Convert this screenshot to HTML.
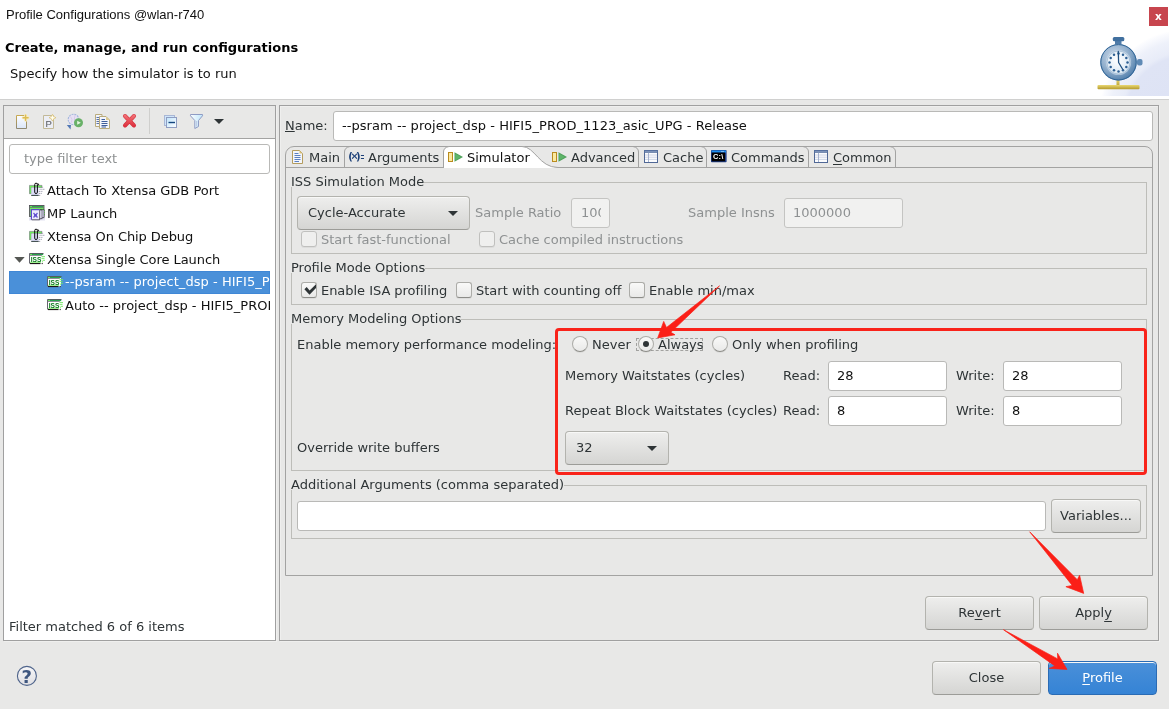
<!DOCTYPE html>
<html><head><meta charset="utf-8"><title>Profile Configurations</title>
<style>
*{box-sizing:border-box;margin:0;padding:0}
html,body{width:1169px;height:709px;overflow:hidden;background:#e8e8e7}
body{position:relative;will-change:transform;font-family:"DejaVu Sans","Liberation Sans",sans-serif;font-size:13px;color:#2e3436;line-height:18px}
.a{position:absolute;white-space:nowrap}
.hdr{left:0;top:0;width:1169px;height:99px;background:#fff}
.hline{left:0;top:99px;width:1169px;height:1px;background:#d0d0cf}
.panel{border:1px solid #a0a0a0;box-shadow:inset 1px 1px 0 rgba(255,255,255,0.3),1px 1px 0 rgba(255,255,255,0.3)}
.inp{background:#fff;border:1px solid #b9b9b7;border-radius:3px}
.dis{color:#8e9192}
.btn{border:1px solid #b3b3ae;border-bottom-color:#9c9c98;border-radius:4px;background:linear-gradient(#eeeeed,#d5d5d3);box-shadow:inset 0 1px #f8f8f7;text-align:center}
.grp{border:1px solid #bdbdb9}
.glab{background:#e8e8e7;height:14px}
.cb{width:16px;height:16px;border:1px solid #acaca8;border-bottom-color:#8c8c88;box-shadow:0 1px 0 rgba(0,0,0,0.05);border-radius:3px;background:linear-gradient(#f9f9f8,#e9e9e8)}
.rb{width:16px;height:16px;border:1px solid #acaca8;border-bottom-color:#8c8c88;box-shadow:0 1px 0 rgba(0,0,0,0.05);border-radius:50%;background:linear-gradient(#f9f9f8,#e9e9e8)}
.tri{width:0;height:0;border-left:5px solid transparent;border-right:5px solid transparent;border-top:5px solid #2e3436}
u{text-decoration:underline;text-underline-offset:2px}
</style></head><body>
<!-- header -->
<div class="a hdr"></div>
<div class="a hline"></div>
<div class="a" style="left:6px;top:6px;font-family:'Liberation Sans',sans-serif;font-size:13px;color:#111">Profile Configurations @wlan-r740</div>
<div class="a" style="left:5px;top:39px;font-weight:bold;color:#000">Create, manage, and run configurations</div>
<div class="a" style="left:10px;top:65px;color:#111">Specify how the simulator is to run</div>
<div class="a" style="left:1149px;top:7px;width:19px;height:19px;background:#c7454e;color:#fff;font-size:10.500px;font-weight:bold;text-align:center;line-height:18px">x</div>

<!-- left panel -->
<div class="a panel" style="left:3px;top:105px;width:273px;height:536px;background:#fff"></div>
<div class="a" style="left:4px;top:106px;width:271px;height:33px;background:#e8e8e7;border-bottom:1px solid #a3a3a2"></div>
<div class="a" style="left:149px;top:108px;width:1px;height:26px;background:#cfcfcd"></div>

<!-- toolbar icons -->
<svg class="a" style="left:15px;top:113px" width="16" height="17" viewBox="0 0 16 17">
<defs><linearGradient id="pg" x1="0" y1="0" x2="0" y2="1"><stop offset="0" stop-color="#fdfdff"/><stop offset="1" stop-color="#dbe6f7"/></linearGradient><linearGradient id="pgs" x1="0" y1="0" x2="0" y2="1"><stop offset="0" stop-color="#c8aa52"/><stop offset="1" stop-color="#8f8872"/></linearGradient></defs>
<path d="M1.500,2.500 H11.500 V15.500 H1.500 Z" fill="url(#pg)" stroke="url(#pgs)" stroke-width="1"/>
<path d="M10.600,2.200 V7.200 M8.100,4.700 H13.100" stroke="#f6ecc0" stroke-width="3" stroke-linecap="round"/>
<path d="M10.600,2.200 V7.200 M8.100,4.700 H13.100" stroke="#dcbc55" stroke-width="1.400" stroke-linecap="round"/>
</svg>
<svg class="a" style="left:42px;top:113px" width="16" height="17" viewBox="0 0 16 17">
<path d="M1.500,2.500 H11.500 V15.500 H1.500 Z" fill="#eceef5" stroke="#c2b998" stroke-width="1"/>
<text x="3.400" y="13.500" font-family="Liberation Sans,sans-serif" font-size="9.600" fill="#55575c">P</text>
<path d="M10.500,1.300 L11.700,3.500 L13.900,4.700 L11.700,5.900 L10.500,8.100 L9.300,5.900 L7.100,4.700 L9.300,3.500 Z" fill="#f7ecc0" stroke="#d8c079" stroke-width="0.800"/>
<path d="M10.500,2.700 V6.700 M8.500,4.700 H12.500" stroke="#fffdf0" stroke-width="1.100"/>
</svg>
<svg class="a" style="left:66px;top:113px" width="18" height="17" viewBox="0 0 18 17">
<circle cx="7.500" cy="6.500" r="5.300" fill="#e6e1f3" stroke="#a3b7dc" stroke-width="1.100" stroke-dasharray="2 0.800"/>
<path d="M4.500,3.500 Q7,6 5.500,9.500 M9,2 Q7.500,6 9.500,10.500" stroke="#d6c6ea" stroke-width="0.900" fill="none"/>
<circle cx="12.500" cy="9.700" r="4.500" fill="#69b168"/>
<path d="M11.200,7.700 L14.800,9.700 L11.200,11.700 Z" fill="#e6f6e2"/>
<path d="M0.800,12 L5,12 L4.500,16.500 Z" fill="#5278b5"/>
</svg>
<svg class="a" style="left:94px;top:113px" width="17" height="17" viewBox="0 0 17 17">
<path d="M1.500,1.500 H8 V13.500 H1.500 Z" fill="#f2f4fb" stroke="#b9ab7c"/>
<path d="M2.500,4.500 H5 M2.500,6.500 H5 M2.500,8.500 H5 M2.500,10.500 H5" stroke="#5b74a8" stroke-width="1"/>
<path d="M5.500,3.500 H12 L15.500,7 V15.500 H5.500 Z" fill="#f4f6fc" stroke="#b9ab7c"/>
<path d="M12,3.500 L15.500,7 H12 Z" fill="#dcc98f"/>
<path d="M7.500,6.500 H11 M7.500,8.500 H13.500 M7.500,10.500 H13.500 M7.500,12.500 H13.500 M7.500,14 H12" stroke="#3f5f9c" stroke-width="1.100"/>
</svg>
<svg class="a" style="left:122px;top:113px" width="16" height="16" viewBox="0 0 16 16">
<defs><linearGradient id="rx" gradientUnits="userSpaceOnUse" x1="0" y1="1" x2="0" y2="14"><stop offset="0" stop-color="#f4777b"/><stop offset="1" stop-color="#dc2d3b"/></linearGradient></defs>
<path d="M3,3 L12,12.500 M12,3 L3,12.500" stroke="#d3303c" stroke-width="4" stroke-linecap="round"/>
<path d="M3,3 L12,12.500 M12,3 L3,12.500" stroke="url(#rx)" stroke-width="3" stroke-linecap="round"/>
</svg>
<svg class="a" style="left:163px;top:114px" width="16" height="16" viewBox="0 0 16 16">
<defs><linearGradient id="cl" x1="0" y1="0" x2="1" y2="1"><stop offset="0" stop-color="#bfe4fb"/><stop offset="1" stop-color="#fdfeff"/></linearGradient></defs>
<rect x="1.500" y="1.500" width="10" height="10" fill="#cfe6fa" stroke="#a9b7d6"/>
<rect x="3.500" y="3.500" width="10" height="10" fill="url(#cl)" stroke="#8f9dc2"/>
<path d="M5.500,8.500 H12" stroke="#14467f" stroke-width="1.400"/>
</svg>
<svg class="a" style="left:189px;top:113px" width="16" height="17" viewBox="0 0 16 17">
<defs><linearGradient id="fn" x1="0" y1="0" x2="1" y2="0"><stop offset="0" stop-color="#fafdff"/><stop offset="1" stop-color="#bfe6fb"/></linearGradient></defs>
<path d="M1.500,1.500 H13.500 V2.800 L9.500,7.500 V13.500 L5.800,15.500 V7.500 L1.500,2.800 Z" fill="url(#fn)" stroke="#8e9bc4" stroke-width="1"/>
<path d="M7.700,8 V13.500" stroke="#b7c3e0" stroke-width="1"/>
</svg>
<div class="a" style="left:214px;top:119px;width:0;height:0;border-left:5px solid transparent;border-right:5px solid transparent;border-top:5px solid #2e3436"></div>
<div class="a inp" style="left:9px;top:144px;width:261px;height:30px"></div>
<div class="a" style="left:24px;top:150px;color:#8e9192">type filter text</div>
<div class="a" style="left:9px;top:271px;width:261px;height:23px;background:#4a90d9;border:1px solid #3f87d6"></div>
<div class="a" style="left:47px;top:182px;color:#111">Attach To Xtensa GDB Port</div>
<div class="a" style="left:47px;top:205px;color:#111">MP Launch</div>
<div class="a" style="left:47px;top:228px;color:#111;letter-spacing:-0.08px">Xtensa On Chip Debug</div>
<div class="a" style="left:47px;top:251px;color:#111;letter-spacing:-0.05px">Xtensa Single Core Launch</div>
<div class="a" style="left:65px;top:273px;color:#fff;width:205px;overflow:hidden;letter-spacing:0.04px">--psram -- project_dsp - HIFI5_PROD_1123</div>
<div class="a" style="left:65px;top:297px;width:205px;overflow:hidden;color:#111">Auto -- project_dsp - HIFI5_PROD_1123</div>
<div class="a" style="left:9px;top:618px">Filter matched 6 of 6 items</div>

<!-- right panel -->
<div class="a panel" style="left:279px;top:105px;width:880px;height:536px"></div>
<div class="a" style="left:285px;top:117px"><u style="text-underline-offset:1px">N</u>ame:</div>
<div class="a inp" style="left:333px;top:111px;width:820px;height:30px"></div>
<div class="a" style="left:342px;top:117px;color:#111;letter-spacing:0.05px">--psram -- project_dsp - HIFI5_PROD_1123_asic_UPG - Release</div>


<!-- tab folder -->
<div class="a" style="left:285px;top:146px;width:868px;height:430px;border:1px solid #a3a3a2;border-radius:8px 8px 0 0;border-top-left-radius:9px"></div>
<div class="a" style="left:286px;top:167px;width:866px;height:1px;background:#a3a3a2"></div>
<svg class="a" style="left:285px;top:146px" width="620" height="23" viewBox="0 0 620 23">
<path d="M158.5,22 V6 Q158.5,1.500 164,0.500 H237 C250,0.500 254,21.500 273,21.500 V22 Z" fill="#fff" stroke="none"/>
<path d="M158.500,22 V6 Q158.500,1.500 164,0.500 H237 C250,0.500 254,21.500 273,21.500" fill="none" stroke="#a3a3a2"/>
<path d="M59.5,21 V6 Q59.5,1.500 65,0.500" fill="none" stroke="#a3a3a2"/>
<path d="M353.5,21 V6 Q353.5,1.500 348,0.500" fill="none" stroke="#a3a3a2"/>
<path d="M421.5,21 V6 Q421.5,1.500 416,0.500" fill="none" stroke="#a3a3a2"/>
<path d="M523.5,21 V6 Q523.5,1.500 518,0.500" fill="none" stroke="#a3a3a2"/>
<path d="M610.5,21 V6 Q610.5,1.500 605,0.500" fill="none" stroke="#a3a3a2"/>
</svg>
<div class="a" style="left:309px;top:149px">Main</div>
<div class="a" style="left:368px;top:149px">Arguments</div>
<div class="a" style="left:467px;top:149px;color:#111">Simulator</div>
<div class="a" style="left:571px;top:149px">Advanced</div>
<div class="a" style="left:663px;top:149px">Cache</div>
<div class="a" style="left:731px;top:149px">Commands</div>
<div class="a" style="left:833px;top:149px"><u>C</u>ommon</div>


<!-- tab icons -->
<svg class="a" style="left:292px;top:150px" width="12" height="14" viewBox="0 0 12 14">
<path d="M0.500,0.500 H7.500 L10.500,3.500 V13.500 H0.500 Z" fill="#f3f6fc" stroke="#b49c5e"/>
<path d="M7.500,0.500 L10.500,3.500 H7.500 Z" fill="#d9c078"/>
<path d="M2.500,3.500 H6.500 M2.500,5.500 H8.500 M2.500,7.500 H8.500 M2.500,9.500 H8.500 M2.500,11.500 H7" stroke="#5a7fc0" stroke-width="1"/>
</svg>
<svg class="a" style="left:348px;top:150px" width="17" height="13" viewBox="0 0 17 13" font-family="DejaVu Sans,sans-serif" fill="#1b3f77"><text x="0.300" y="9.600" font-size="10" font-weight="bold">(</text><text x="2.700" y="9.300" font-size="9" stroke="#1b3f77" stroke-width="0.350">×</text><text x="8.100" y="9.600" font-size="10" font-weight="bold">)</text><rect x="12.900" y="5" width="3.100" height="1"/><rect x="12.900" y="8" width="3.100" height="1"/></svg>
<svg class="a" style="left:448px;top:152px" width="16" height="10" viewBox="0 0 16 10">
<rect x="0.500" y="0.500" width="4" height="9" fill="#fbe9a0" stroke="#b98b1e"/>
<path d="M6.500,0.300 L15,5 L6.500,9.700 Z" fill="#4ea05a"/><path d="M7.300,1.800 L13,5 L7.300,8.200 Z" fill="#5fb56a"/>
</svg>
<svg class="a" style="left:552px;top:152px" width="16" height="10" viewBox="0 0 16 10">
<rect x="0.500" y="0.500" width="4" height="9" fill="#fbe9a0" stroke="#b98b1e"/>
<path d="M6.500,0.300 L15,5 L6.500,9.700 Z" fill="#4ea05a"/><path d="M7.300,1.800 L13,5 L7.300,8.200 Z" fill="#5fb56a"/>
</svg>
<svg class="a" style="left:644px;top:150px" width="15" height="13" viewBox="0 0 15 13">
<rect x="0.500" y="0.500" width="13" height="12" fill="#fbfcfe" stroke="#506896"/>
<rect x="0" y="0" width="14" height="2.800" fill="#56709f"/>
<rect x="1" y="1" width="12" height="0.700" fill="#8fa2c6"/>
<path d="M1,5 H13 M1,7.200 H13 M1,9.400 H13" stroke="#c9d1e3" stroke-width="0.900"/>
<path d="M4.500,2.800 V12" stroke="#9eacca" stroke-width="0.900"/>
</svg>
<svg class="a" style="left:711px;top:150px" width="16" height="13" viewBox="0 0 16 13">
<rect x="0" y="0" width="15.600" height="12.300" rx="0.800" fill="#1d3a84"/>
<rect x="0.600" y="0.500" width="14.400" height="2" fill="#1e8ff0"/>
<rect x="10" y="1.100" width="3" height="0.800" fill="#8cc4f5"/>
<rect x="0.800" y="2.600" width="13.200" height="8.700" fill="#000"/>
<text x="1.900" y="9" font-family="Liberation Sans,sans-serif" font-size="7.400" font-weight="bold" fill="#fff" textLength="10.300" lengthAdjust="spacing">C:\</text>
</svg>
<svg class="a" style="left:814px;top:150px" width="15" height="13" viewBox="0 0 15 13">
<rect x="0.500" y="0.500" width="13" height="12" fill="#fbfcfe" stroke="#506896"/>
<rect x="0" y="0" width="14" height="2.800" fill="#56709f"/>
<rect x="1" y="1" width="12" height="0.700" fill="#8fa2c6"/>
<path d="M1,5 H13 M1,7.200 H13 M1,9.400 H13" stroke="#c9d1e3" stroke-width="0.900"/>
<path d="M4.500,2.800 V12" stroke="#9eacca" stroke-width="0.900"/>
</svg>

<!-- group 1 -->
<div class="a grp" style="left:291px;top:182px;width:856px;height:72px"></div>
<div class="a glab" style="left:291px;top:173px">ISS Simulation Mode</div>
<div class="a btn" style="left:297px;top:196px;width:173px;height:34px"></div>
<div class="a" style="left:308px;top:204px">Cycle-Accurate</div>
<div class="a tri" style="left:448px;top:211px"></div>
<div class="a dis" style="left:475px;top:204px">Sample Ratio</div>
<div class="a inp" style="left:571px;top:198px;width:39px;height:30px;background:#f1f1f0;border-color:#c4c4c2"></div>
<div class="a dis" style="left:581px;top:204px;width:20px;overflow:hidden">1000</div>
<div class="a dis" style="left:688px;top:204px">Sample Insns</div>
<div class="a inp" style="left:784px;top:198px;width:119px;height:30px;background:#f1f1f0;border-color:#c4c4c2"></div>
<div class="a dis" style="left:793px;top:204px">1000000</div>
<div class="a cb" style="left:301px;top:231px;background:#efefee;border-color:#c0c0be"></div>
<div class="a dis" style="left:321px;top:231px">Start fast-functional</div>
<div class="a cb" style="left:479px;top:231px;background:#efefee;border-color:#c0c0be"></div>
<div class="a dis" style="left:499px;top:231px">Cache compiled instructions</div>

<!-- group 2 -->
<div class="a grp" style="left:291px;top:268px;width:856px;height:37px"></div>
<div class="a glab" style="left:291px;top:259px">Profile Mode Options</div>
<div class="a cb" style="left:301px;top:282px"></div>
<svg class="a" style="left:301px;top:282px" width="16" height="16" viewBox="0 0 16 16"><path d="M3.400,7.300 L5.700,5.100 L8.600,8.500 L15,2.300 V6 L8.500,12.700 Z" fill="#2e3436"/></svg>
<div class="a" style="left:321px;top:282px;letter-spacing:-0.04px">Enable ISA profiling</div>
<div class="a cb" style="left:456px;top:282px"></div>
<div class="a" style="left:476px;top:282px">Start with counting off</div>
<div class="a cb" style="left:629px;top:282px"></div>
<div class="a" style="left:649px;top:282px">Enable min/max</div>

<!-- group 3 -->
<div class="a grp" style="left:291px;top:319px;width:856px;height:152px"></div>
<div class="a glab" style="left:291px;top:310px">Memory Modeling Options</div>
<div class="a" style="left:297px;top:336px">Enable memory performance modeling:</div>
<div class="a rb" style="left:572px;top:336px"></div>
<div class="a" style="left:592px;top:336px">Never</div>
<div class="a" style="left:636px;top:338px;width:67px;height:13px;border:1px dashed #a2a2a0"></div>
<div class="a rb" style="left:638px;top:336px"></div>
<div class="a" style="left:643px;top:341px;width:6px;height:6px;border-radius:50%;background:#2e3436"></div>
<div class="a" style="left:658px;top:336px">Always</div>
<div class="a rb" style="left:712px;top:336px"></div>
<div class="a" style="left:732px;top:336px">Only when profiling</div>
<div class="a" style="left:565px;top:367px">Memory Waitstates (cycles)</div>
<div class="a" style="left:783px;top:367px">Read:</div>
<div class="a inp" style="left:828px;top:361px;width:119px;height:30px"></div>
<div class="a" style="left:837px;top:367px;color:#111">28</div>
<div class="a" style="left:956px;top:367px">Write:</div>
<div class="a inp" style="left:1003px;top:361px;width:119px;height:30px"></div>
<div class="a" style="left:1012px;top:367px;color:#111">28</div>
<div class="a" style="left:565px;top:402px">Repeat Block Waitstates (cycles)</div>
<div class="a" style="left:783px;top:402px">Read:</div>
<div class="a inp" style="left:828px;top:396px;width:119px;height:30px"></div>
<div class="a" style="left:837px;top:402px;color:#111">8</div>
<div class="a" style="left:956px;top:402px">Write:</div>
<div class="a inp" style="left:1003px;top:396px;width:119px;height:30px"></div>
<div class="a" style="left:1012px;top:402px;color:#111">8</div>
<div class="a" style="left:297px;top:439px">Override write buffers</div>
<div class="a btn" style="left:565px;top:431px;width:104px;height:34px"></div>
<div class="a" style="left:576px;top:439px">32</div>
<div class="a tri" style="left:647px;top:446px"></div>

<!-- group 4 -->
<div class="a grp" style="left:291px;top:485px;width:856px;height:54px"></div>
<div class="a glab" style="left:291px;top:476px">Additional Arguments (comma separated)</div>
<div class="a inp" style="left:297px;top:501px;width:749px;height:30px"></div>
<div class="a btn" style="left:1051px;top:499px;width:90px;height:34px;line-height:32px">Variables...</div>

<!-- red annotations -->
<div class="a" style="left:555px;top:328px;width:592px;height:147px;border:3px solid #f9231a;border-radius:4px"></div>

<!-- bottom -->
<div class="a btn" style="left:925px;top:596px;width:109px;height:34px;line-height:32px">Re<u>v</u>ert</div>
<div class="a btn" style="left:1039px;top:596px;width:109px;height:34px;line-height:32px">Appl<u style="text-underline-offset:4px">y</u></div>
<div class="a btn" style="left:932px;top:661px;width:109px;height:34px;line-height:32px">Close</div>
<div class="a btn" style="left:1048px;top:661px;width:109px;height:34px;line-height:32px;background:linear-gradient(#4a90d9,#3583d5);border-color:#2a6bb4;color:#fff"><u>P</u>rofile</div>

<!-- tree icons -->
<svg class="a" style="left:14px;top:257px" width="11" height="6" viewBox="0 0 11 6"><path d="M0.300,0 H10.700 L5.500,5.800 Z" fill="#555753"/></svg>
<svg width="0" height="0" style="position:absolute"><defs>
<g id="iss">
<rect x="0.500" y="0.500" width="13.500" height="10" fill="#fff"/>
<rect x="0.900" y="8.800" width="11" height="1.400" fill="#9df08f"/>
<rect x="0.100" y="0.500" width="0.900" height="10" fill="#55555f"/>
<rect x="0.500" y="-0.100" width="14" height="1.100" fill="#5a5560"/>
<rect x="1" y="0.900" width="13.200" height="1.200" fill="#27a24c"/><rect x="1" y="0.900" width="2" height="1.200" fill="#6fe85f"/>
<rect x="0.800" y="2.100" width="12" height="0.800" fill="#77777f"/>
<rect x="1" y="10" width="10.500" height="1.100" fill="#1d1418"/><rect x="12.700" y="10" width="1" height="1.100" fill="#1d1418"/>
<text x="1.800" y="8.700" font-family="Liberation Sans,sans-serif" font-size="6.600" font-weight="bold" fill="#0b7a1c" textLength="10.600" lengthAdjust="spacing">ISS</text>
<path d="M12.500,3.600 h3.500 M12.500,5.400 h3 M13.500,7.300 h2.500 M13,8.800 h1" stroke="#6fe85f" stroke-width="0.900"/>
</g>
<g id="att">
<path d="M0.400,3.400 H13 V5.500 H2.400 V11.700 H0.400 Z" fill="#6fe85f" stroke="#6a5a78" stroke-width="0.500"/>
<rect x="2.400" y="5.600" width="7.200" height="7.400" fill="#dcdcf8"/>
<rect x="2.200" y="12.900" width="7.500" height="0.900" fill="#1a2a2a"/>
<rect x="5.700" y="1.200" width="2.700" height="10.300" rx="1.300" fill="none" stroke="#0a0a0a" stroke-width="1"/>
<path d="M8.400,1.600 Q9.800,1.400 9.800,3.300" fill="none" stroke="#0a0a0a" stroke-width="0.900"/>
<path d="M13.300,5.400 h0.800 M10.500,7.300 h5.500 M9.800,9.400 h4 M9.800,11.400 h3 M9.800,13.400 h2" stroke="#77778f" stroke-width="0.700" stroke-dasharray="1.200 0.600"/>
</g>
</defs></svg>
<svg class="a" style="left:29px;top:182px" width="18" height="15" viewBox="0 0 18 15"><use href="#att"/></svg>
<svg class="a" style="left:29px;top:228px" width="18" height="15" viewBox="0 0 18 15"><use href="#att"/></svg>
<svg class="a" style="left:29px;top:205px" width="17" height="16" viewBox="0 0 17 16">
<rect x="0" y="12.500" width="16" height="3" fill="#e4e4f2"/>
<rect x="0.500" y="0.500" width="14.500" height="11" fill="#72e862" stroke="#4a4450" stroke-width="0.800"/>
<rect x="0.500" y="0.300" width="14.500" height="0.900" fill="#5a5560"/>
<rect x="1" y="1.100" width="13" height="1.200" fill="#27a24c"/><rect x="1" y="1.100" width="2" height="1.200" fill="#6fe85f"/>
<rect x="0.800" y="2.300" width="14" height="0.700" fill="#6e6e76"/>
<path d="M15,5.500 h1 M15,7.500 h1 M15,9.500 h1" stroke="#6fe85f" stroke-width="1"/>
<rect x="11" y="4.800" width="4" height="8" fill="#e6e6fb" stroke="#1d1828" stroke-width="0.600"/>
<rect x="9" y="5" width="4" height="8.800" fill="#eeeeff" stroke="#1d1828" stroke-width="0.600"/>
<rect x="2.400" y="4.700" width="8.300" height="10.100" fill="#ebebfd"/>
<path d="M2.400,14.800 V4.700 H10.700" fill="none" stroke="#5b4bcb" stroke-width="1.200"/>
<path d="M10.700,5.200 V14.800 H2.800" fill="none" stroke="#1d1828" stroke-width="0.700"/>
<path d="M4.500,8 L8.500,12.500 M8.500,8 L4.500,12.500" stroke="#6a5ad2" stroke-width="1.300"/>
<circle cx="6.500" cy="10.200" r="1.300" fill="#5d4dcd"/>
</svg>
<svg class="a" style="left:29px;top:253px" width="17" height="12" viewBox="0 0 17 12"><use href="#iss"/></svg>
<svg class="a" style="left:47px;top:276px" width="17" height="12" viewBox="0 0 17 12"><use href="#iss"/></svg>
<svg class="a" style="left:47px;top:299px" width="17" height="12" viewBox="0 0 17 12"><use href="#iss"/></svg>

<!-- stopwatch -->
<div class="a" style="left:1060px;top:26px;width:109px;height:70px;overflow:hidden"><div style="position:absolute;left:38px;top:3px;width:180px;height:180px;border-radius:50%;background:radial-gradient(circle closest-side,#dde2f4 0,#dfe4f5 70%,#e8ecf8 75%,#eef1fa 88%,#fafbfe 97%,#fff 100%)"></div></div>
<svg class="a" style="left:1094px;top:34px" width="52" height="58" viewBox="0 0 52 58">
<defs>
<radialGradient id="swb" cx="0.400" cy="0.350" r="0.700"><stop offset="0" stop-color="#cfdceb"/><stop offset="0.550" stop-color="#93b0cd"/><stop offset="1" stop-color="#4a79a8"/></radialGradient>
<radialGradient id="swf" cx="0.450" cy="0.400" r="0.650"><stop offset="0" stop-color="#ffffff"/><stop offset="1" stop-color="#d7e6f3"/></radialGradient>
<linearGradient id="gold" x1="0" y1="0" x2="0" y2="1"><stop offset="0" stop-color="#e9d873"/><stop offset="1" stop-color="#b59a2c"/></linearGradient>
</defs>
<rect x="22.500" y="45" width="3" height="8" fill="url(#gold)"/>
<rect x="3.500" y="51" width="42" height="4.200" rx="1" fill="url(#gold)"/>
<rect x="43" y="25" width="5.500" height="6.500" rx="2" fill="#5f8ab5"/>
<rect x="21" y="5" width="6.500" height="7" fill="#4f7ba8"/>
<rect x="18.800" y="3" width="11.500" height="4.200" rx="1.500" fill="#41709f"/>
<circle cx="24.500" cy="28.300" r="18.200" fill="url(#swb)"/>
<circle cx="24.500" cy="28.300" r="17.700" fill="none" stroke="#2f6496" stroke-width="1"/>
<circle cx="24.500" cy="28.500" r="12.600" fill="#c9d9e9" opacity="0.700"/><circle cx="24.500" cy="28.500" r="11.500" fill="url(#swf)" stroke="#8fadca" stroke-width="0.600"/>
<g fill="#2d5f93">
<circle cx="24.500" cy="19.500" r="1.250"/><circle cx="29" cy="20.700" r="1.250"/><circle cx="32.300" cy="24" r="1.250"/><circle cx="33.500" cy="28.500" r="1.250"/><circle cx="32.300" cy="33" r="1.250"/><circle cx="29" cy="36.300" r="1.250"/><circle cx="24.500" cy="37.500" r="1.250"/><circle cx="20" cy="36.300" r="1.250"/><circle cx="16.700" cy="33" r="1.250"/><circle cx="15.500" cy="28.500" r="1.250"/><circle cx="16.700" cy="24" r="1.250"/><circle cx="20" cy="20.700" r="1.250"/>
</g>
<path d="M24.300,17.500 L24.600,28.500 L28.500,35" fill="none" stroke="#1f4f80" stroke-width="1.300" stroke-linecap="round" stroke-linejoin="round"/>
</svg>

<!-- help -->
<svg class="a" style="left:16px;top:665px" width="22" height="22" viewBox="0 0 22 22">
<defs><linearGradient id="hg" x1="0" y1="0" x2="0" y2="1"><stop offset="0" stop-color="#f7f7f9"/><stop offset="1" stop-color="#dfdfe3"/></linearGradient></defs>
<circle cx="10.900" cy="10.900" r="9.500" fill="url(#hg)" stroke="#4f648b" stroke-width="1.100"/>
<text x="10.800" y="17.800" text-anchor="middle" font-family="DejaVu Sans,sans-serif" font-weight="bold" font-size="18" fill="#3e567f">?</text>
</svg>

<!-- arrows -->
<svg class="a" style="left:0;top:0;pointer-events:none" width="1169" height="709" viewBox="0 0 1169 709">
<g fill="#fb1f17" stroke="#fb1f17" stroke-width="0.700" stroke-linejoin="round">
<path d="M719.5,285.900 L666.500,327.500 L663.700,321.400 L657.700,337.900 L675,334.800 L670.800,332.300 Z"/>
<path d="M1029.700,531.800 L1077.300,579.700 L1079.600,575.200 L1083.700,593.400 L1065.900,586.700 L1072.200,585.400 Z"/>
<path d="M1003.500,629.700 L1057.700,658.900 L1057.500,653.200 L1067,669.400 L1049.200,668.400 L1054.900,665.900 Z"/>
</g>
</svg>
</body></html>
